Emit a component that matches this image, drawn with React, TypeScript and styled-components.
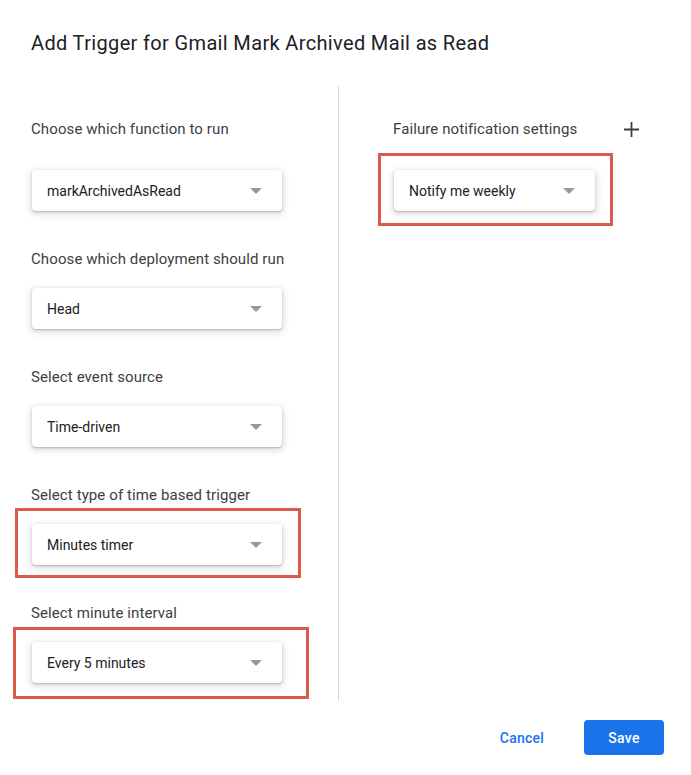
import React from 'react';
import styled, { createGlobalStyle } from 'styled-components';

const GlobalStyle = createGlobalStyle`
  body {
    margin: 0;
    background: #ffffff;
    font-family: Roboto, "Liberation Sans", Arial, sans-serif;
    color: #202124;
  }
`;

const Dialog = styled.div`
  width: 691px;
  height: 775px;
  box-sizing: border-box;
  padding-top: 29px;
  background: #ffffff;
`;

const Title = styled.h1`
  margin: 0 0 0 31px;
  font-size: 20px;
  line-height: 28px;
  font-weight: 400;
  color: #202124;
  letter-spacing: 0.35px;
`;

const Columns = styled.div`
  display: grid;
  grid-template-columns: 339px 1fr;
  margin-top: 29px;
`;

const LeftColumn = styled.div`
  display: flex;
  flex-direction: column;
  gap: 38px;
  padding: 33px 0 18px 31px;
  border-right: 1px solid #d7d9dc;
`;

const RightColumn = styled.div`
  padding: 33px 50px 0 54px;
`;

const Field = styled.div`
  display: flex;
  flex-direction: column;
  align-items: flex-start;
`;

const LabelRow = styled.div`
  display: flex;
  align-items: center;
  justify-content: space-between;
  height: 20px;
`;

const Label = styled.div<{ $gap?: number }>`
  font-size: 15px;
  line-height: 20px;
  color: #3c4043;
  letter-spacing: 0.1px;
  margin-bottom: ${(p) => p.$gap ?? 19}px;
`;

const SelectWrap = styled.div`
  position: relative;
  margin-left: 1px;
`;

const Select = styled.div<{ $width: number }>`
  width: ${(p) => p.$width}px;
  height: 41px;
  box-sizing: border-box;
  display: flex;
  align-items: center;
  justify-content: space-between;
  padding: 0 20px 0 15px;
  background: #ffffff;
  border-radius: 4px;
  box-shadow: 0 1px 2px rgba(60, 64, 67, 0.3), 0 2px 6px 2px rgba(60, 64, 67, 0.15);
  font-size: 14px;
  color: #202124;
`;

const Caret = styled.span`
  width: 0;
  height: 0;
  border-left: 6px solid transparent;
  border-right: 6px solid transparent;
  border-top: 6px solid #999999;
`;

const Highlight = styled.div<{ $t: number; $r: number; $b: number; $l: number }>`
  position: absolute;
  top: ${(p) => -p.$t}px;
  right: ${(p) => -p.$r}px;
  bottom: ${(p) => -p.$b}px;
  left: ${(p) => -p.$l}px;
  border: 3px solid #dc5a4b;
  pointer-events: none;
`;

const AddButton = styled.button`
  width: 20px;
  height: 20px;
  padding: 0;
  border: none;
  background: transparent;
  display: flex;
  align-items: center;
  justify-content: center;
  cursor: pointer;
`;

const Footer = styled.div`
  display: flex;
  justify-content: flex-end;
  align-items: center;
  gap: 22px;
  padding: 19px 27px 0 0;
`;

const Button = styled.button<{ $primary?: boolean }>`
  height: 35px;
  min-width: 80px;
  border: none;
  border-radius: 4px;
  font-family: Roboto, "Liberation Sans", Arial, sans-serif;
  font-size: 14px;
  font-weight: 500;
  letter-spacing: 0.25px;
  cursor: pointer;
  background: ${(p) => (p.$primary ? '#1a73e8' : 'transparent')};
  color: ${(p) => (p.$primary ? '#ffffff' : '#1a73e8')};
`;

type Box = { t: number; r: number; b: number; l: number };

const Dropdown: React.FC<{ value: string; width?: number; highlight?: Box }> = ({
  value,
  width = 250,
  highlight,
}) => (
  <SelectWrap>
    <Select $width={width}>
      <span>{value}</span>
      <Caret />
    </Select>
    {highlight && <Highlight $t={highlight.t} $r={highlight.r} $b={highlight.b} $l={highlight.l} />}
  </SelectWrap>
);

const fields: { label: string; value: string; gap?: number; highlight?: Box }[] = [
  { label: 'Choose which function to run', value: 'markArchivedAsRead', gap: 31 },
  { label: 'Choose which deployment should run', value: 'Head' },
  { label: 'Select event source', value: 'Time-driven' },
  {
    label: 'Select type of time based trigger',
    value: 'Minutes timer',
    highlight: { t: 16, r: 19, b: 13, l: 17 },
  },
  {
    label: 'Select minute interval',
    value: 'Every 5 minutes',
    highlight: { t: 15, r: 27, b: 16, l: 19 },
  },
];

const App: React.FC = () => {
  return (
    <Dialog>
      <GlobalStyle />
      <Title>Add Trigger for Gmail Mark Archived Mail as Read</Title>
      <Columns>
        <LeftColumn>
          {fields.map((f) => (
            <Field key={f.label}>
              <Label $gap={f.gap}>{f.label}</Label>
              <Dropdown value={f.value} highlight={f.highlight} />
            </Field>
          ))}
        </LeftColumn>
        <RightColumn>
          <LabelRow>
            <Label $gap={0}>Failure notification settings</Label>
            <AddButton aria-label="Add notification">
              <svg width="15" height="15" viewBox="0 0 15 15">
                <path d="M7.5 0v15M0 7.5h15" stroke="#3c4043" strokeWidth="1.8" fill="none" />
              </svg>
            </AddButton>
          </LabelRow>
          <Field style={{ marginTop: 31 }}>
            <Dropdown value="Notify me weekly" width={201} highlight={{ t: 17, r: 18, b: 15, l: 16 }} />
          </Field>
        </RightColumn>
      </Columns>
      <Footer>
        <Button>Cancel</Button>
        <Button $primary>Save</Button>
      </Footer>
    </Dialog>
  );
};

export default App;
